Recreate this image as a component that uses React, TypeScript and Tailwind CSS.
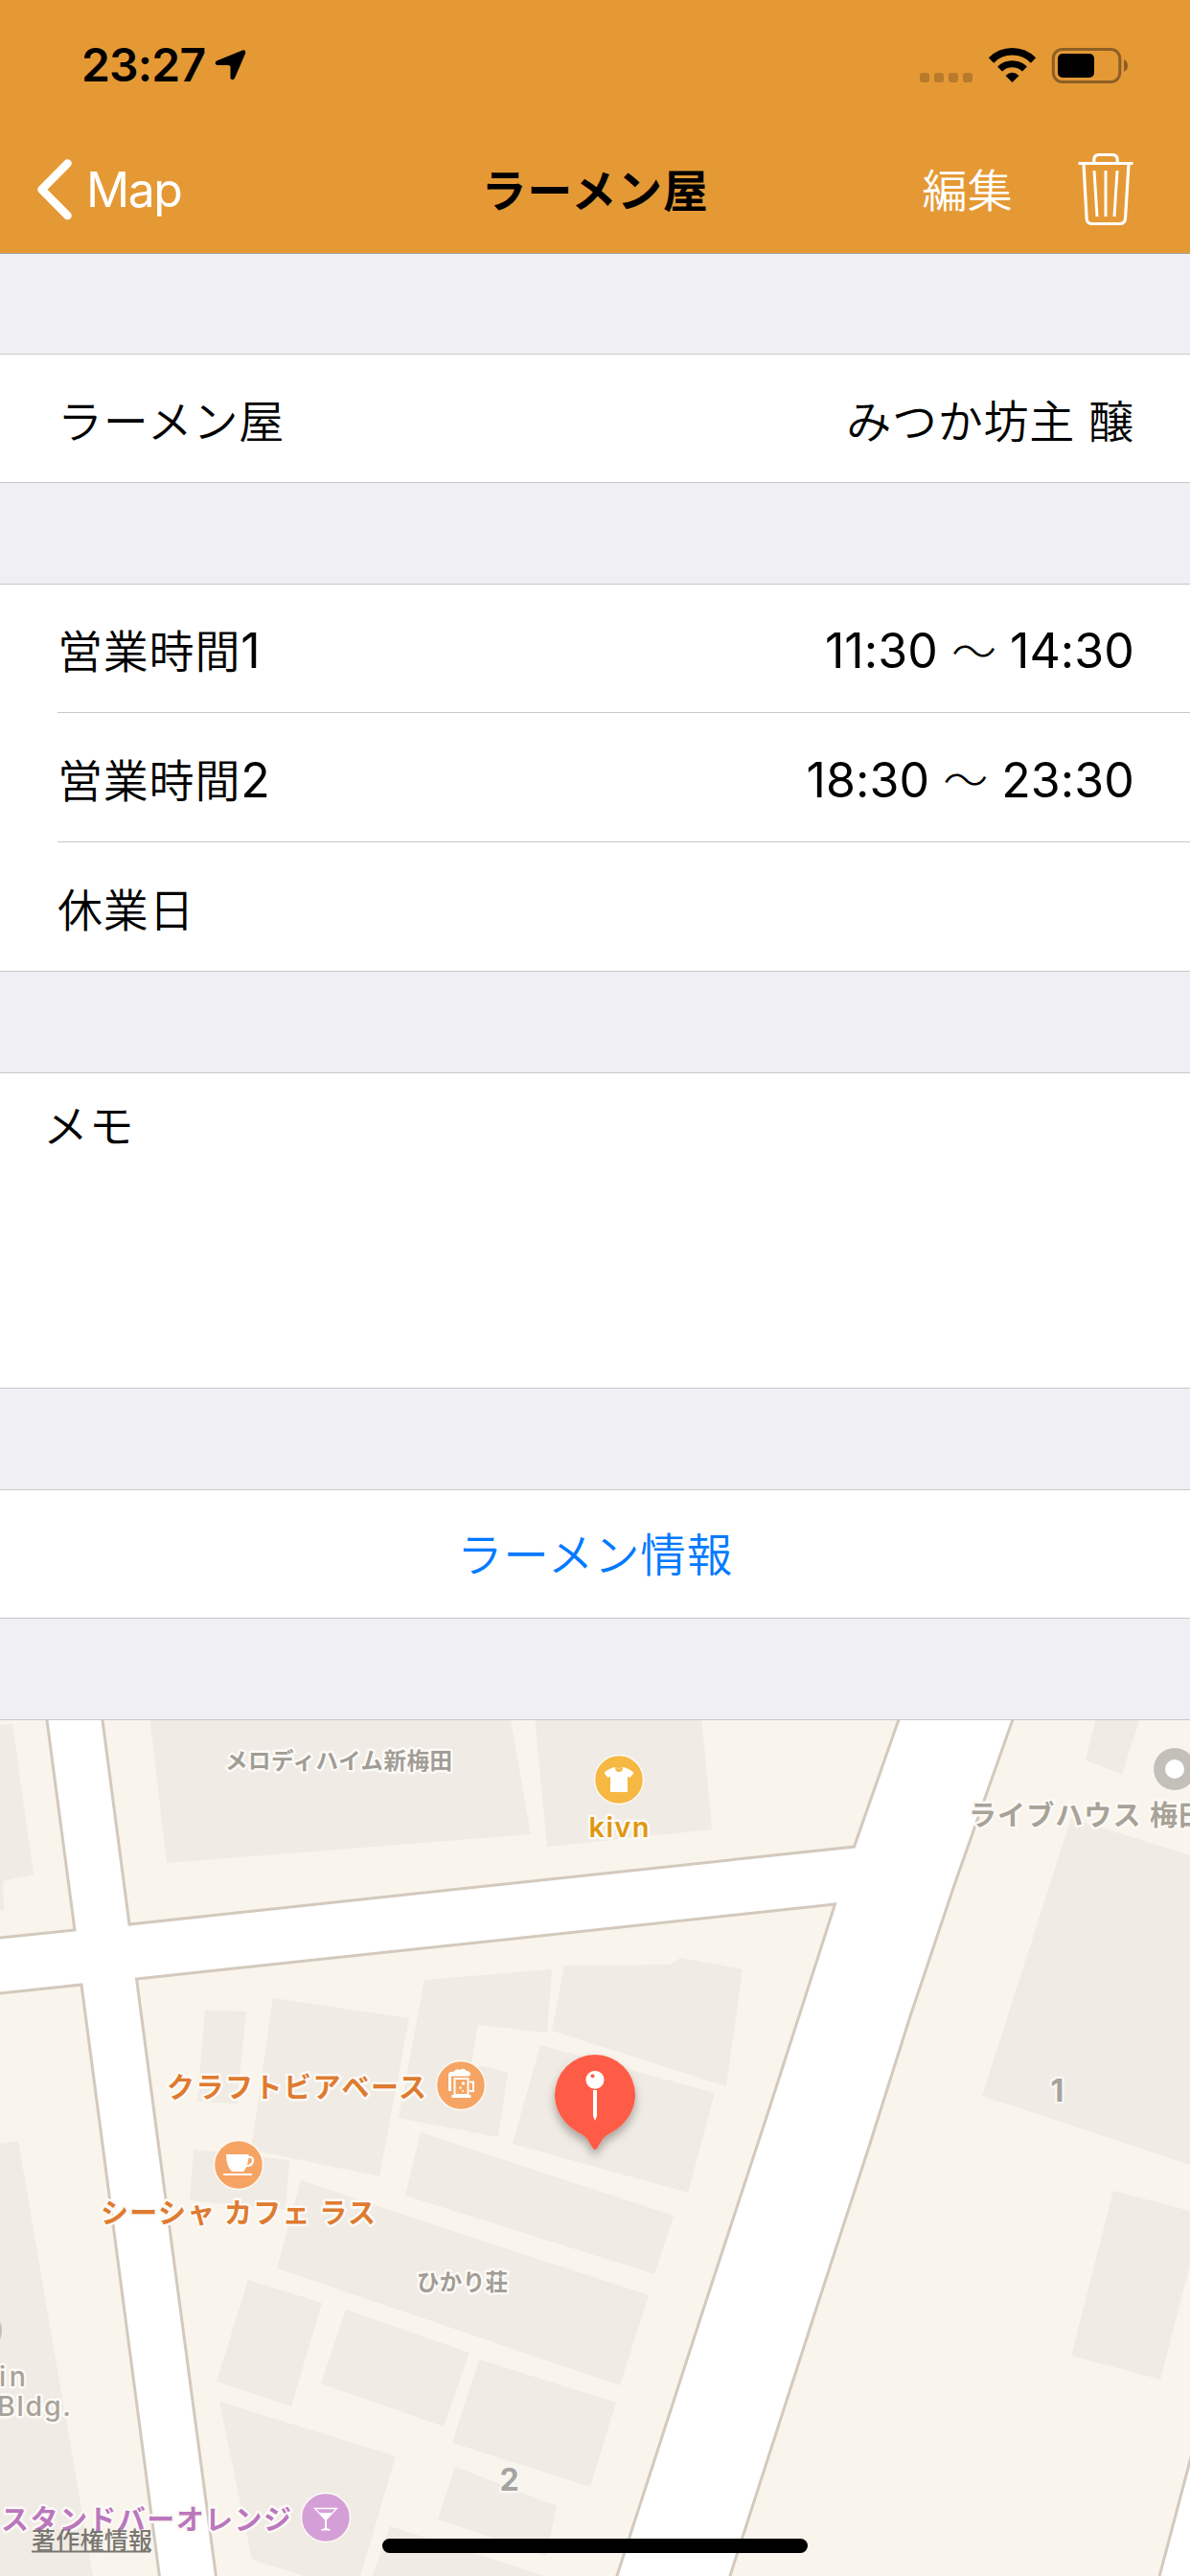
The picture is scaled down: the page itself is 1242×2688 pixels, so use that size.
import type { ReactNode } from 'react';

interface RowProps {
  label: string;
  digit?: string;
  children?: ReactNode;
}

interface MapLabelProps {
  x: number;
  y: number;
  width: number;
  color: string;
  size?: number;
  children: string;
}

const blocks = [
  '-10,1780 47,1780 78,2014 -10,2023',
  '105,1780 135,2008 891.5,1927 943,1780',
  '-10,2081 85,2071 106,2230 168,2700 -10,2700',
  '142.5,2065 871.5,1987 803,2200 733,2413 640,2700 227,2700 165,2235',
  '1062,1780 996,1967 949,2107 907,2240 850,2415 758,2700 1207,2700 1242,2568 1260,2500 1260,1780',
];

const buildings = [
  '156,1790 174,1944 554,1914 532,1790',
  '558,1790 571,1927 743,1909 732,1790',
  '0,1800 13,1799 35,1956 3,1963 4,1994 0,1994',
  '214,2098 257,2099 247,2195 206,2193',
  '285,2085 427,2106 396,2271 262,2243',
  '443,2066 576,2055 571,2121 499,2113 492,2154 530,2162 520,2230 416,2210',
  '589,2051 700,2050 710,2043 775,2055 758,2177 576,2119',
  '564,2134 746,2184 718,2288 535,2237',
  '439,2225 703,2312 683,2373 423,2291',
  '314,2275 400,2304 677,2395 647,2489 289,2367',
  '202,2243 302,2254 298,2306 198,2296',
  '259,2379 336,2403 304,2511 226,2485',
  '361,2410 490,2455 463,2532 335,2487',
  '500,2462 643,2507 616,2595 472,2549',
  '229,2506 413,2563 376,2688 317,2688 263,2671',
  '475,2574 581,2615 570,2667 457,2629',
  '407,2636 568,2688 389,2688',
  '0,2237 19,2234 97,2688 0,2688',
  '1145,1790 1191,1790 1171,1851 1133,1837',
  '1118,1897 1242,1936 1242,2259 1025,2187',
  '1162,2286 1242,2307 1242,2363 1211,2483 1118,2458',
];

const StatusIcons = () => (
  <svg className="h-[40px] w-[220px]" viewBox="959 47 220 40" fill="none">
    {[960, 975, 990, 1005].map((x) => (
      <rect key={x} x={x} y="75" width="10" height="10" rx="3" fill="#b87a2b" />
    ))}
    <path d="M1034.500 62A31 31 0 0 1 1078.500 62" stroke="#000" strokeWidth="7.500" />
    <path d="M1043.500 71A18.500 18.500 0 0 1 1069.500 71" stroke="#000" strokeWidth="7" />
    <path d="M1049.500 78Q1056.500 71.500 1063.500 78L1056.500 85Z" fill="#000" />
    <rect x="1099.300" y="50.500" width="69.500" height="34" rx="9.500" stroke="#8d5f25" strokeWidth="3" />
    <rect x="1104" y="55" width="38" height="25" rx="5" fill="#000" />
    <path d="M1173 61Q1177 63 1177 67.500T1173 74Z" fill="#8d5f25" />
  </svg>
);

const TrashIcon = () => (
  <svg className="h-[76px] w-[58px]" viewBox="1124.500 160 58 76" fill="none" stroke="#fff" strokeWidth="3">
    <path d="M1125 170.500H1182" />
    <path d="M1141.300 170V167Q1141.300 161.500 1147 161.500H1160Q1165.700 161.500 1165.700 167V170" strokeWidth="3.200" />
    <path d="M1130.500 171L1133.600 228Q1134 233.500 1139 233.500H1168.500Q1173.500 233.500 1174 228L1177.500 171" strokeWidth="3.200" />
    <path d="M1141.500 178L1144.500 226M1153.500 178V226M1165.500 178L1162.500 226" />
  </svg>
);

const Row = ({ label, digit, children }: RowProps) => (
  <div className="flex h-full items-center justify-between pr-[58px] pt-[5px]">
    <span>
      {label}
      <span className="text-[50px] font-normal tracking-normal">{digit}</span>
    </span>
    <span>{children}</span>
  </div>
);

const Hours = ({ from, to }: { from: string; to: string }) => (
  <span className="flex items-center text-[50px] font-normal tracking-[0.1px]">
    {from}
    <span className="mx-[14px] text-[47px] font-light">〜</span>
    {to}
  </span>
);

// Text with the pale halo used for places on the map
const MapLabel = ({ x, y, width, color, size = 29, children }: MapLabelProps) => (
  <text
    x={x}
    y={y}
    textLength={width}
    fill={color}
    fontSize={size}
    stroke="#fcfaf6"
    strokeWidth="5"
    strokeLinejoin="round"
    paintOrder="stroke"
    className="font-semibold"
  >
    {children}
  </text>
);

const Spot = ({ x, y, color }: { x: number; y: number; color: string }) => (
  <circle cx={x} cy={y} r="25.500" fill={color} stroke="#fcfaf6" strokeWidth="1.500" />
);

const ShopMap = () => (
  <svg className="block h-[893px] w-full" viewBox="0 1795 1242 893">
    <defs>
      <filter id="pinShadow" x="-30%" y="-30%" width="160%" height="170%">
        <feDropShadow dx="0" dy="6" stdDeviation="5" floodColor="#000" floodOpacity="0.300" />
      </filter>
    </defs>
    <rect y="1795" width="1242" height="893" fill="#fff" />
    {blocks.map((points) => (
      <polygon key={points} points={points} fill="#f9f4ec" stroke="#d3c9bd" strokeWidth="3" />
    ))}
    {buildings.map((points) => (
      <polygon key={points} points={points} fill="#f0ebe4" />
    ))}

    <MapLabel x={235} y={1845.5} width={237} size={23.5} color="#a19d96">メロディハイム新梅田</MapLabel>
    <MapLabel x={435} y={2389.5} width={95} size={23.5} color="#a19d96">ひかり荘</MapLabel>

    {/* Clothes shop */}
    <Spot x={646} y={1857} color="#f6b843" />
    <path
      d="M641 1844Q646 1846 651 1844L656 1846Q660 1848 661.500 1850L657.500 1855L655 1853.500V1870H637V1853.500L634.500 1855L630.500 1850Q632 1848 636 1846Z"
      fill="#fff"
    />
    <path d="M642 1844.500Q642 1849 646 1849T650 1844.500Q646 1846.500 642 1844.500Z" fill="#f6b843" />
    <MapLabel x={614.5} y={1917} width={63} size={29} color="#e0970f">kivn</MapLabel>

    {/* Live house */}
    <circle cx="1226" cy="1846" r="22.500" fill="#c3c0b9" stroke="#fcfaf6" />
    <circle cx="1226" cy="1846" r="10" fill="#fff" />
    <MapLabel x={1011} y={1905} width={248} color="#a8a298">ライブハウス 梅田</MapLabel>

    <circle cx="-20" cy="2432" r="22" fill="#c3c0b9" />
    <g className="font-medium" fill="#a8a298" fontSize="28.500" stroke="#fcfaf6" strokeWidth="5" strokeLinejoin="round" paintOrder="stroke">
      <text x="-1" y="2490" textLength="28">in</text>
      <text x="-3" y="2521" textLength="77">Bldg.</text>
    </g>

    <g fill="#a5a39f" fontSize="32" stroke="#f8f6f2" strokeWidth="5" strokeLinejoin="round" paintOrder="stroke" className="font-bold">
      <text x="1096.500" y="2193">1</text>
      <text x="521.500" y="2599">2</text>
    </g>

    {/* Beer bar */}
    <MapLabel x={174} y={2188.5} width={271} color="#df7b30">クラフトビアベース</MapLabel>
    <Spot x={481} y={2176} color="#f6a464" />
    <g fill="none" stroke="#fff" strokeWidth="2">
      <path d="M474.500 2186V2169H488.500V2186Z" />
      <path d="M490 2172.500H494V2182H490" />
      <path d="M471.500 2187.500H491.500" strokeWidth="3" />
      <path d="M469.500 2182V2168" strokeWidth="3" />
    </g>
    <path
      d="M468 2171V2164Q469 2161 473 2162Q476 2158 480 2160Q484 2157 487 2161Q491 2161 491 2165Q490 2167 488 2166.500H471V2171Z"
      fill="#fff"
    />
    <g fill="#fff">
      <circle cx="483.500" cy="2174" r="1.800" />
      <circle cx="480.500" cy="2178.500" r="1.300" />
      <circle cx="483" cy="2182" r="1" />
    </g>

    {/* Cafe */}
    <MapLabel x={105} y={2320} width={287} color="#df7b30">シーシャ カフェ ラス</MapLabel>
    <Spot x={249} y={2259} color="#f6a464" />
    <path d="M236 2248H259.500Q259.500 2260 254 2266H242Q236 2260 236 2248Z" fill="#fff" />
    <path d="M259 2251Q264.500 2250 264 2255Q263 2260.500 256.500 2260" fill="none" stroke="#fff" strokeWidth="2.200" />
    <path d="M233 2269H263" stroke="#fff" strokeWidth="2" />

    {/* Bar */}
    <MapLabel x={1} y={2640} width={303} color="#bb77bd">スタンドバーオレンジ</MapLabel>
    <Spot x={340} y={2627} color="#d49fd6" />
    <path d="M328.500 2617.500H351.500L340 2629.500Z" fill="none" stroke="#fff" strokeWidth="1.300" />
    <path d="M333 2622H347L341 2629V2638L345 2639.500V2640.500H335V2639.500L339 2638V2629Z" fill="#fff" />

    <text x="33" y="2660" textLength="126" fontSize="25" fill="#7a7771" className="font-medium">
      著作権情報
    </text>
    <path d="M33 2662.500H157" stroke="#7a7771" strokeWidth="2" />

    {/* Selected shop */}
    <path
      d="M621 2144A42 42 0 0 1 663 2186C663 2204 651 2219 636 2226.500C629 2230 627 2236 623 2242Q621 2244 619 2242C615 2236 613 2230 606 2226.500C591 2219 579 2204 579 2186A42 42 0 0 1 621 2144Z"
      fill="#ff5b47"
      filter="url(#pinShadow)"
    />
    <circle cx="621" cy="2170.300" r="9.500" fill="#fff" />
    <circle cx="618.500" cy="2166.200" r="2" fill="#ff5b47" />
    <path d="M619 2181H623V2208L621 2213L619 2208Z" fill="#fff" />

    {/* Home indicator */}
    <rect x="399" y="2649" width="444" height="15" rx="7.500" fill="#000" />
  </svg>
);

const App = () => {
  return (
    <div className="w-[1242px] h-[2688px] overflow-hidden bg-[#efeff4] font-[Inter,'Noto_Sans_CJK_JP',sans-serif] text-[47px] leading-none text-black">
      <header className="h-[265px] border-b border-[#a5a5ab] bg-[#e59935]">
        <div className="flex h-[132px] items-center justify-between pl-[85px] pr-[63px] pt-[4px]">
          <div className="flex items-center gap-[10px] text-[48px] font-semibold">
            <span className="tracking-[-0.8px]">23:27</span>
            <svg className="h-[32px] w-[33px]" viewBox="225 52 33 32">
              <path
                d="M254 52.500Q258 51.500 257 56L246 81.500Q244 84.500 241.500 82V69.500Q241 68 239.500 68H227.500Q224 66 227 63.500Z"
                fill="#000"
              />
            </svg>
          </div>
          <StatusIcons />
        </div>
        <nav className="grid h-[132px] grid-cols-[1fr_auto_1fr] items-center px-[38px] text-white">
          <div className="flex items-center gap-[14px]">
            <svg className="h-[64px] w-[38px]" viewBox="38 167 38 64" fill="none">
              <path d="M70.500 171.500L43.500 198.700L70.500 226" stroke="#fff" strokeWidth="8.500" strokeLinecap="round" strokeLinejoin="round" />
            </svg>
            <span className="text-[50px] tracking-[-1.5px]">Map</span>
          </div>
          <h1 className="font-bold tracking-[0.8px] text-black">ラーメン屋</h1>
          <div className="mr-[21px] flex items-center justify-end gap-[68px]">
            <span className="font-[350] tracking-[0.3px]">編集</span>
            <TrashIcon />
          </div>
        </nav>
      </header>

      <main className="font-[350] tracking-[0.8px]">
        <section className="mt-[104px] h-[135px] border-y border-[#c8c7cc] bg-white pl-[60px]">
          <Row label="ラーメン屋">みつか坊主 醸</Row>
        </section>

        <section className="mt-[105px] grid h-[405px] grid-rows-[134px_135px_134px] divide-y divide-[#c8c7cc] border-y border-[#c8c7cc] bg-white ml-0 pl-[60px]">
          <div>
            <Row label="営業時間" digit="1">
              <Hours from="11:30" to="14:30" />
            </Row>
          </div>
          <div>
            <Row label="営業時間" digit="2">
              <Hours from="18:30" to="23:30" />
            </Row>
          </div>
          <div>
            <Row label="休業日" />
          </div>
        </section>

        <section className="mt-[105px] h-[330px] border-y border-[#c8c7cc] bg-white pl-[45px] pt-[31px]">
          メモ
        </section>

        <section className="mt-[105px] flex h-[135px] items-center justify-center border-y border-[#c8c7cc] bg-white pt-[2px] text-[47.5px] text-[#007aff]">
          ラーメン情報
        </section>
      </main>

      <div className="mt-[105px] border-t border-[#c8c7cc]">
        <ShopMap />
      </div>
    </div>
  );
};

export default App;
